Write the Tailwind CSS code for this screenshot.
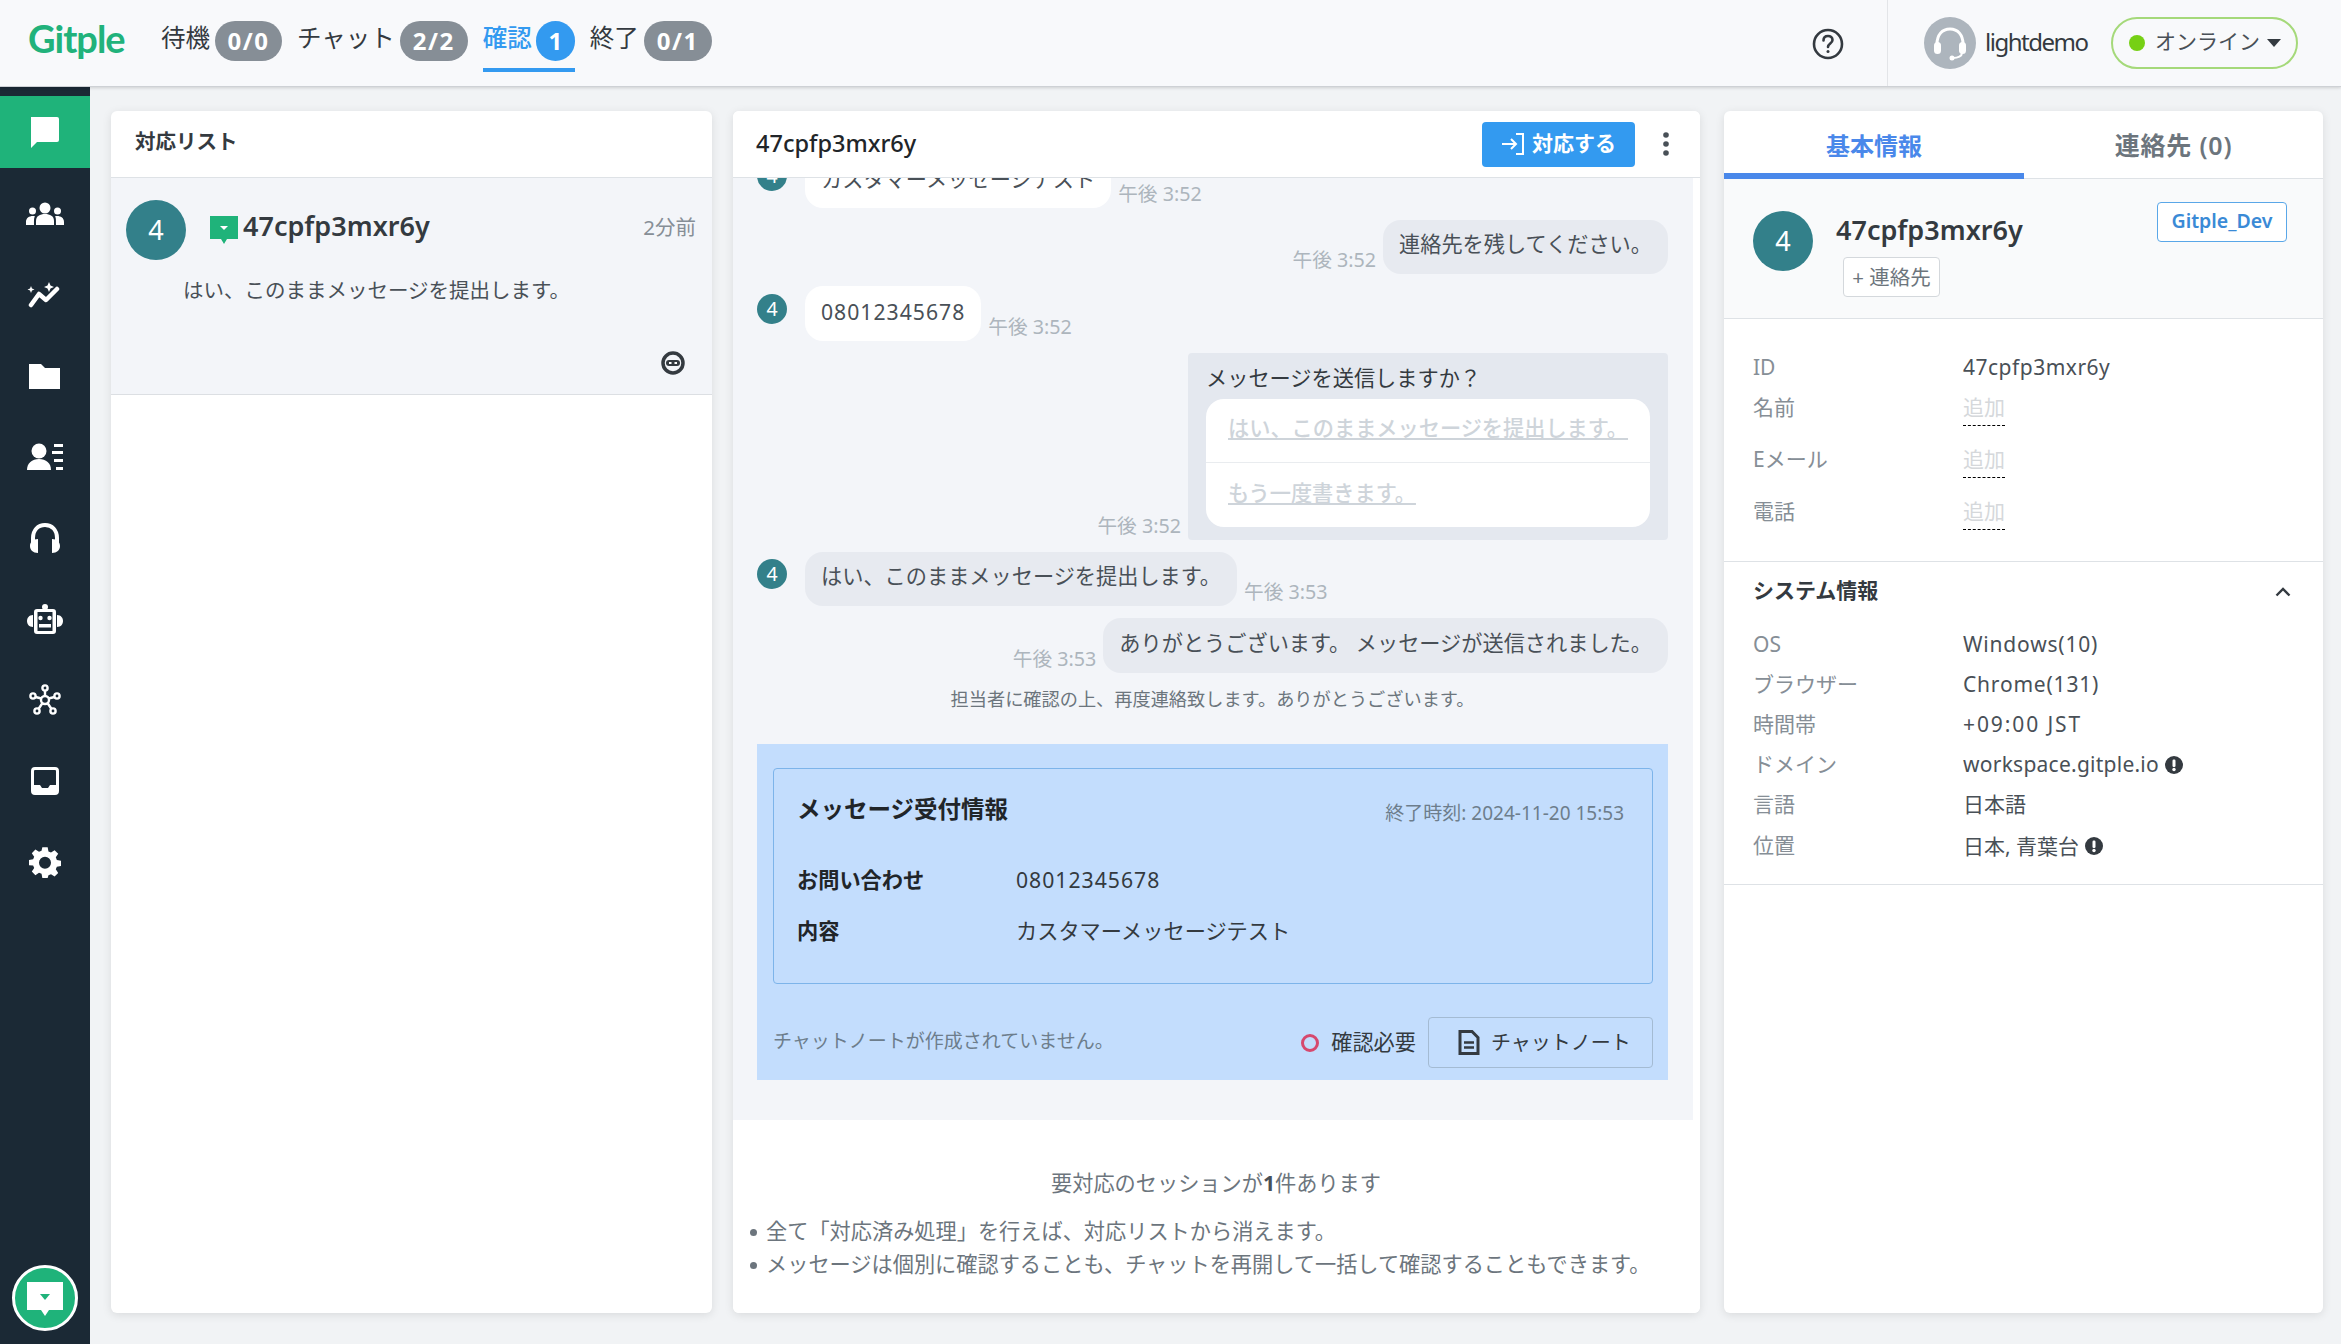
<!DOCTYPE html>
<html lang="ja">
<head>
<meta charset="UTF-8">
<title>Gitple</title>
<script src="https://cdn.jsdelivr.net/npm/@tailwindcss/browser@4"></script>
</head>
<body class="h-screen w-screen overflow-hidden flex flex-col bg-[#f1f3f5] text-[#495057] font-['Noto_Sans','Noto_Sans_CJK_JP',sans-serif]">

<!-- top bar -->
<header class="relative z-10 h-[87px] shrink-0 flex items-start bg-[#f8f9fb] border-b border-[#ced1d5] shadow-[0_1px_3px_rgba(0,0,0,.15)]">
    <div class="w-[161px] pl-[28px] pt-[14px] text-[38px] leading-[48px] font-['Lato',sans-serif] font-bold tracking-[-1px] text-[#21b27b]">Gitple</div>
    <nav class="flex items-start pt-[21px] text-[24.500px] leading-[40px] text-[#343a40]">
        <span class="mt-[-3px]">待機</span>
        <span class="ml-[5px] w-[67px] h-[40px] rounded-[20px] bg-[#868e96] text-white text-[24px] font-bold tracking-[1.500px] text-center">0/0</span>
        <span class="ml-[15px] mt-[-3px]">チャット</span>
        <span class="ml-[5px] w-[68px] h-[40px] rounded-[20px] bg-[#868e96] text-white text-[24px] font-bold tracking-[1.500px] text-center">2/2</span>
        <div class="ml-[15px] h-[51px] flex items-start border-b-4 border-[#339af0]">
            <span class="mt-[-3px] text-[#339af0] font-medium">確認</span>
            <span class="ml-[4px] w-[39px] h-[40px] rounded-[20px] bg-[#339af0] text-white text-[24px] font-bold text-center">1</span>
        </div>
        <span class="ml-[15px] mt-[-3px]">終了</span>
        <span class="ml-[5px] w-[68px] h-[40px] rounded-[20px] bg-[#868e96] text-white text-[24px] font-bold tracking-[1.500px] text-center">0/1</span>
    </nav>
    <div class="ml-auto flex items-center h-full">
        <svg class="w-[32px] h-[32px] mr-[43px] mt-[2px]" viewBox="0 0 32 32" fill="none" stroke="#343a40" stroke-width="2.600"><circle cx="16" cy="16" r="14"/><path d="M11.500 12.500c0-3 2-4.500 4.500-4.500s4.500 1.600 4.500 4c0 3.500-4.500 3.500-4.500 7" stroke-linecap="round"/><circle cx="16" cy="23.500" r="1.500" fill="#343a40" stroke="none"/></svg>
        <div class="h-full border-l border-[#e3e5e8] pl-[36px] flex items-center">
            <div class="w-[52px] h-[52px] rounded-full bg-[#adb5bd] flex items-center justify-center">
                <svg class="w-[40px] h-[40px]" viewBox="0 0 40 40" fill="none"><path d="M7 21c0-9 5-15 13-15s13 6 13 15" stroke="#fff" stroke-width="3"/><rect x="4" y="19" width="7" height="12" rx="3.500" fill="#fff"/><rect x="29" y="19" width="7" height="12" rx="3.500" fill="#fff"/><path d="M32 30c0 3-4 5-9 5" stroke="#fff" stroke-width="2"/><circle cx="22" cy="35" r="2.500" fill="#fff"/></svg>
            </div>
            <span class="ml-[9px] mt-[-3px] w-[102px] text-[24px] tracking-[-1.500px] text-[#343a40]">lightdemo</span>
            <div class="ml-[24px] mr-[43px] w-[187px] h-[52px] rounded-full border-2 border-[#a5d97a] flex items-center pl-[16px]">
                <span class="w-[16px] h-[16px] rounded-full bg-[#76d015]"></span>
                <span class="ml-[10px] mt-[-2px] text-[21px] text-[#495057]">オンライン</span>
                <svg class="ml-[7px] w-[14px] h-[8px]" viewBox="0 0 14 8"><path d="M0 0h14L7 8z" fill="#343a40"/></svg>
            </div>
        </div>
    </div>
</header>

<div class="flex-1 flex min-h-0">
    <!-- left nav -->
    <aside class="w-[90px] shrink-0 bg-[#1b2935] flex flex-col items-stretch pt-[9px] gap-[9px] text-white">
        <a class="h-[72px] mb-[1px] bg-[#1fb37a] flex items-center justify-center">
            <svg class="w-[32px] h-[32px] mr-[2px]" viewBox="0 0 32 32" fill="#fff"><path d="M3 1h26a2 2 0 0 1 2 2v21a2 2 0 0 1-2 2H9l-6 6z"/></svg>
        </a>
        <a class="h-[72px] flex items-center justify-center">
            <svg class="w-[38px] h-[24px]" viewBox="0 0 38 24" fill="#fff"><circle cx="19" cy="6" r="5.500"/><circle cx="6.500" cy="9" r="3.500"/><circle cx="31.500" cy="9" r="3.500"/><path d="M10 23v-4c0-5 4-7 9-7s9 2 9 7v4z"/><path d="M0 23v-3c0-4 3-6 7-6 1 0 1.500 0 2 .3-1 1.500-1 3-1 8.700zM38 23v-3c0-4-3-6-7-6-1 0-1.500 0-2 .3 1 1.500 1 3 1 8.700z"/></svg>
        </a>
        <a class="h-[72px] flex items-center justify-center">
            <svg class="w-[36px] h-[26px]" viewBox="0 0 36 26" fill="none"><path d="M4 23l8-11 7 6 11-11" stroke="#fff" stroke-width="4.500" stroke-linecap="round" stroke-linejoin="round"/><path d="M22 0l1.500 3.500L27 5l-3.500 1.500L22 10l-1.500-3.500L17 5l3.500-1.500zM4 4l1 2.500L7.500 7.500 5 8.500 4 11 3 8.500.5 7.500 3 6.500z" fill="#fff"/></svg>
        </a>
        <a class="h-[72px] flex items-center justify-center">
            <svg class="w-[31px] h-[25px] mr-[2px]" viewBox="0 0 31 25" fill="#fff"><path d="M0 0h12l4 4h15v21H0z"/></svg>
        </a>
        <a class="h-[72px] flex items-center justify-center">
            <svg class="w-[36px] h-[28px]" viewBox="0 0 36 28" fill="#fff"><circle cx="12" cy="8" r="7.500"/><path d="M0 27c0-7 5-11 12-11s12 4 12 11z"/><rect x="27" y="1" width="9" height="3"/><rect x="25" y="8" width="11" height="3"/><rect x="27" y="16" width="9" height="3"/><rect x="29" y="24" width="7" height="3"/></svg>
        </a>
        <a class="h-[72px] flex items-center justify-center">
            <svg class="w-[32px] h-[30px]" viewBox="0 0 32 30" fill="none"><path d="M4 20v-5C4 7 9 2 16 2s12 5 12 13v5" stroke="#fff" stroke-width="4"/><path d="M1 23c0-4 3-7 8-7v14c-5 0-8-3-8-7zM31 23c0-4-3-7-8-7v14c5 0 8-3 8-7z" fill="#fff"/></svg>
        </a>
        <a class="h-[72px] flex items-center justify-center">
            <svg class="w-[36px] h-[30px]" viewBox="0 0 36 30" fill="#fff"><circle cx="18" cy="3" r="3"/><path fill-rule="evenodd" d="M10 5h16a3 3 0 0 1 3 3v19a3 3 0 0 1-3 3H10a3 3 0 0 1-3-3V8a3 3 0 0 1 3-3zm.5 3v19h15V8z"/><path d="M6 11v12c-4 0-6-3-6-6s2-6 6-6zM30 11v12c4 0 6-3 6-6s-2-6-6-6z"/><circle cx="13.500" cy="14" r="2.200"/><circle cx="22.500" cy="14" r="2.200"/><rect x="12" y="20" width="12" height="3.500"/></svg>
        </a>
        <a class="h-[72px] flex items-center justify-center">
            <svg class="w-[32px] h-[32px]" viewBox="0 0 32 32" fill="none" stroke="#fff" stroke-width="2.400"><circle cx="16" cy="16" r="4"/><circle cx="16" cy="4" r="2.600"/><circle cx="4" cy="12" r="2.600"/><circle cx="28" cy="12" r="2.600"/><circle cx="8" cy="27" r="2.600"/><circle cx="24" cy="27" r="2.600"/><path d="M16 7v5M6.500 13l6 1.500M25.500 13l-6 1.500M9.500 25l4-6M22.500 25l-4-6"/></svg>
        </a>
        <a class="h-[72px] flex items-center justify-center">
            <svg class="w-[28px] h-[28px]" viewBox="0 0 28 28" fill="none"><rect x="1.500" y="1.500" width="25" height="25" rx="2.500" stroke="#fff" stroke-width="3"/><path d="M3 18h6l2 3h6l2-3h6v8H3z" fill="#fff"/></svg>
        </a>
        <a class="h-[72px] flex items-center justify-center">
            <svg class="w-[32px] h-[32px]" viewBox="0 0 24 24" fill="#fff"><path fill-rule="evenodd" d="M14 1l.6 3.100 1.900.8 2.700-1.800 2.700 2.800-1.800 2.600.8 2 3.100.5v4l-3.100.6-.8 1.900 1.800 2.700-2.700 2.700-2.700-1.800-1.900.8L14 24h-4l-.6-3.100-1.900-.8-2.700 1.800-2.700-2.700 1.800-2.700-.8-1.900L0 14.500v-4l3.100-.5.8-2L2.100 5.400l2.700-2.800 2.700 1.800 1.900-.8L10 1zM12 8a4.500 4.500 0 1 0 0 9 4.500 4.500 0 0 0 0-9z"/></svg>
        </a>
        <a class="mt-auto mb-[13px] ml-[12px] w-[66px] h-[66px] rounded-full bg-[#1fb37a] border-[3px] border-white flex items-center justify-center">
            <svg class="w-[40px] h-[40px]" viewBox="0 0 40 40"><path d="M2 4h36v28H24l-4 6-4-6H2z" fill="#fff"/><path d="M15 16h10l-5 6z" fill="#1fb37a"/></svg>
        </a>
    </aside>

    <!-- panels -->
    <main class="flex-1 min-w-0 flex items-start pt-[24px] pl-[21px] gap-[21px]">
        <!-- list -->
        <section class="w-[601px] h-[1202px] shrink-0 bg-white rounded-[6px] shadow-[0_2px_10px_rgba(0,0,0,.1)] overflow-hidden">
            <div class="h-[67px] flex items-start pl-[24px] pt-[14px] leading-[32px] border-b border-[#dee2e6] text-[20.500px] font-bold text-[#343a40]">対応リスト</div>
            <div class="relative h-[217px] bg-[#f3f5f9] border-b border-[#dcdfe3] pl-[15px] pr-[16px] pt-[22px]">
                <div class="flex items-start">
                    <div class="w-[60px] h-[60px] rounded-full bg-[#33808a] text-white text-[27px] leading-[60px] text-center">4</div>
                    <svg class="ml-[24px] mt-[16px] w-[28px] h-[28px]" viewBox="0 0 28 28"><path d="M0 0h28v23H17l-3 5-3-5H0z" fill="#1fb37a"/><path d="M10 10h8l-4 4z" fill="#fff"/></svg>
                    <span class="ml-[5px] mt-[6px] text-[27px] leading-[40px] font-semibold text-[#343a40]">47cpfp3mxr6y</span>
                    <span class="ml-auto mt-[13px] text-[20.500px] leading-[28px] text-[#868e96]">2分前</span>
                </div>
                <p class="mt-[15px] ml-[57px] text-[20.500px] leading-[30px] text-[#495057]">はい、このままメッセージを提出します。</p>
                <svg class="absolute right-[27px] bottom-[19px] w-[24px] h-[24px]" viewBox="0 0 24 24"><circle cx="12" cy="12" r="10" fill="none" stroke="#343a40" stroke-width="3.500"/><rect x="5" y="9" width="14" height="6" rx="3" fill="#343a40"/><rect x="8" y="11" width="2.500" height="2" fill="#fff"/><rect x="13.500" y="11" width="2.500" height="2" fill="#fff"/></svg>
            </div>
        </section>

        <!-- conversation -->
        <section class="w-[967px] h-[1202px] shrink-0 bg-white rounded-[6px] shadow-[0_2px_10px_rgba(0,0,0,.1)] overflow-hidden flex flex-col">
            <div class="relative z-10 h-[67px] shrink-0 flex items-center pl-[23px] pr-[31px] bg-white border-b border-[#dee2e6]">
                <span class="text-[23.500px] font-medium text-[#212529]">47cpfp3mxr6y</span>
                <button class="ml-auto w-[153px] h-[45px] rounded-[4px] bg-[#339af0] text-white text-[21px] font-bold flex items-center justify-center">
                    <svg class="w-[24px] h-[24px] mr-[7px]" viewBox="0 0 24 24" fill="none" stroke="#fff" stroke-width="2"><path d="M1 12h13M10 7l5 5-5 5M15 2h7v20h-7"/></svg>
                    対応する
                </button>
                <svg class="ml-[28px] w-[6px] h-[24px]" viewBox="0 0 6 24" fill="#495057"><circle cx="3" cy="3" r="2.800"/><circle cx="3" cy="12" r="2.800"/><circle cx="3" cy="21" r="2.800"/></svg>
            </div>
            <div class="flex-1 min-h-0 mr-[7px] bg-[#f3f5f9] overflow-hidden pl-[24px] pr-[25px] text-[21.200px] leading-[30px]">
                <div class="mt-[-25px] flex items-end">
                    <div class="self-start mt-[8px] w-[30px] h-[30px] rounded-full bg-[#33808a] text-white text-[19.500px] leading-[30px] text-center">4</div>
                    <div class="ml-[18px] bg-white rounded-[18px] pl-[16px] pr-[16px] pt-[11px] pb-[14px]">カスタマーメッセージテスト</div>
                    <span class="ml-[7px] mb-[4px] text-[19.700px] leading-[20px] text-[#adb5bd]">午後 3:52</span>
                </div>
                <div class="mt-[12px] flex items-end justify-end">
                    <span class="mr-[7px] mb-[4px] text-[19.700px] leading-[20px] text-[#adb5bd]">午後 3:52</span>
                    <div class="bg-[#e7eaf0] rounded-[18px] px-[16px] pt-[9px] pb-[15px]">連絡先を残してください。</div>
                </div>
                <div class="mt-[12px] flex items-end">
                    <div class="self-start mt-[8px] w-[30px] h-[30px] rounded-full bg-[#33808a] text-white text-[19.500px] leading-[30px] text-center">4</div>
                    <div class="ml-[18px] bg-white rounded-[18px] px-[16px] pt-[11px] pb-[14px] tracking-[1px]">08012345678</div>
                    <span class="ml-[7px] mb-[4px] text-[19.700px] leading-[20px] text-[#adb5bd]">午後 3:52</span>
                </div>
                <div class="mt-[12px] flex items-end justify-end">
                    <span class="mr-[7px] mb-[4px] text-[19.700px] leading-[20px] text-[#adb5bd]">午後 3:52</span>
                    <div class="w-[480px] h-[187px] bg-[#e4e8ef] rounded-[4px] pl-[18px] pr-[18px] pt-[10px]">
                        <div class="text-[#343a40]">メッセージを送信しますか？</div>
                        <div class="mt-[6px] bg-white rounded-[18px] h-[128px] flex flex-col text-[#ced4da] font-medium">
                            <div class="h-[64px] border-b border-[#e9ecef] pl-[22px] pt-[14px]"><a class="underline">はい、このままメッセージを提出します。</a></div>
                            <div class="pl-[22px] pt-[15px]"><a class="underline">もう一度書きます。</a></div>
                        </div>
                    </div>
                </div>
                <div class="mt-[12px] flex items-end">
                    <div class="self-start mt-[7px] w-[30px] h-[30px] rounded-full bg-[#33808a] text-white text-[19.500px] leading-[30px] text-center">4</div>
                    <div class="ml-[18px] bg-[#e7eaf0] rounded-[18px] px-[16px] pt-[9px] pb-[15px]">はい、このままメッセージを提出します。</div>
                    <span class="ml-[7px] mb-[4px] text-[19.700px] leading-[20px] text-[#adb5bd]">午後 3:53</span>
                </div>
                <div class="mt-[12px] flex items-end justify-end">
                    <span class="mr-[7px] mb-[4px] text-[19.700px] leading-[20px] text-[#adb5bd]">午後 3:53</span>
                    <div class="bg-[#e7eaf0] rounded-[18px] px-[16px] pt-[10px] pb-[15px]">ありがとうございます。 メッセージが送信されました。</div>
                </div>
                <p class="mt-[11px] text-center text-[18.200px] leading-[30px] text-[#6c757d]">担当者に確認の上、再度連絡致します。ありがとうございます。</p>
                <div class="mt-[30px] h-[336px] bg-[#c3ddfd] pl-[16px] pr-[15px] pt-[24px]">
                    <div class="h-[216px] border border-[#7db4ea] rounded-[4px] px-[23px] pt-[24px]">
                        <div class="flex items-start">
                            <span class="text-[23.500px] leading-[32px] font-bold text-[#212529]">メッセージ受付情報</span>
                            <span class="ml-auto mt-[4px] mr-[5px] text-[19px] leading-[32px] text-[#6d7d8c]">終了時刻: 2024-11-20 15:53</span>
                        </div>
                        <div class="mt-[33px] flex leading-[36px]">
                            <span class="w-[219px] font-bold text-[#212529]">お問い合わせ</span>
                            <span class="text-[#343a40] tracking-[1px]">08012345678</span>
                        </div>
                        <div class="mt-[15px] flex leading-[36px]">
                            <span class="w-[219px] font-bold text-[#212529]">内容</span>
                            <span class="text-[#343a40]">カスタマーメッセージテスト</span>
                        </div>
                    </div>
                    <div class="mt-[33px] flex items-center">
                        <span class="mt-[-3px] text-[19px] text-[#6d7d8c]">チャットノートが作成されていません。</span>
                        <span class="ml-auto w-[18px] h-[18px] rounded-full border-[3px] border-[#d6486e]"></span>
                        <span class="ml-[12px] mt-[-2px] text-[#343a40]">確認必要</span>
                        <button class="ml-[12px] w-[225px] h-[51px] rounded-[4px] border border-[#a4bbd3] flex items-center pl-[29px] text-[20px] text-[#343a40]">
                            <svg class="w-[22px] h-[27px] mr-[11px]" viewBox="0 0 22 26" fill="none" stroke="#343a40" stroke-width="3"><path d="M2 2h12l6 6v16H2z"/><path d="M6 13h10M6 18h10" stroke-width="2.400"/></svg>
                            チャットノート
                        </button>
                    </div>
                </div>
            </div>
            <div class="h-[193px] shrink-0 bg-white pt-[48px] pl-[17px] text-[21.200px] leading-[30px] text-[#6c757d]">
                <p class="text-center mr-[18px]">要対応のセッションが<b class="font-bold text-[#495057]">1</b>件あります</p>
                <p class="mt-[18px]"><span class="inline-block w-[7px] h-[7px] mr-[9px] mb-[3px] rounded-full bg-[#6c757d]"></span>全て「対応済み処理」を行えば、対応リストから消えます。</p>
                <p class="mt-[3px]"><span class="inline-block w-[7px] h-[7px] mr-[9px] mb-[3px] rounded-full bg-[#6c757d]"></span>メッセージは個別に確認することも、チャットを再開して一括して確認することもできます。</p>
            </div>
        </section>

        <!-- details -->
        <section class="ml-[3px] w-[599px] h-[1202px] shrink-0 bg-white rounded-[6px] shadow-[0_2px_10px_rgba(0,0,0,.1)] overflow-hidden">
            <div class="flex h-[68px] border-b border-[#dee2e6] text-[24px] font-semibold">
                <div class="w-[300px] h-[68px] pt-[7px] border-b-[6px] border-[#4a88ea] text-[#4a88ea] flex items-center justify-center">基本情報</div>
                <div class="flex-1 pt-[2px] text-[25px] tracking-[.8px] text-[#6c757d] flex items-center justify-center">連絡先 (0)</div>
            </div>
            <div class="h-[140px] bg-[#f9fafb] border-b border-[#dee2e6] pl-[29px] pr-[36px] flex items-start">
                <div class="mt-[32px] w-[60px] h-[60px] rounded-full bg-[#33808a] text-white text-[27px] leading-[60px] text-center">4</div>
                <div class="ml-[23px] mt-[31px]">
                    <div class="text-[27px] leading-[40px] font-semibold text-[#343a40]">47cpfp3mxr6y</div>
                    <button class="mt-[7px] ml-[7px] w-[97px] h-[40px] rounded-[4px] bg-white border border-[#d4d8dc] text-[20.500px] text-[#6c757d]">+ 連絡先</button>
                </div>
                <span class="ml-auto mt-[23px] w-[130px] h-[40px] rounded-[4px] bg-white border border-[#5aa7e8] text-[#3a8ad6] text-[19.500px] font-semibold leading-[36px] text-center">Gitple_Dev</span>
            </div>
            <div class="pt-[29px] pb-[29px] pl-[29px] border-b border-[#dee2e6] text-[21px]">
                <div class="flex items-center h-[40px]"><span class="w-[210px] text-[#868e96]">ID</span><span class="tracking-[.5px] text-[#495057]">47cpfp3mxr6y</span></div>
                <div class="flex h-[40px] mb-[12px]"><span class="w-[210px] leading-[38px] text-[#868e96]">名前</span><span class="h-[38px] leading-[38px] border-b border-dashed border-black text-[#d5d8db]">追加</span></div>
                <div class="flex h-[40px] mb-[12px]"><span class="w-[210px] leading-[38px] text-[#868e96]">Eメール</span><span class="h-[38px] leading-[38px] border-b border-dashed border-black text-[#d5d8db]">追加</span></div>
                <div class="flex h-[40px]"><span class="w-[210px] leading-[38px] text-[#868e96]">電話</span><span class="h-[38px] leading-[38px] border-b border-dashed border-black text-[#d5d8db]">追加</span></div>
            </div>
            <div class="pl-[29px] pr-[32px] pb-[18px] border-b border-[#dee2e6] text-[21px]">
                <div class="h-[63px] pb-[5px] flex items-center font-bold text-[#343a40]">
                    システム情報
                    <svg class="ml-auto mt-[2px] w-[16px] h-[10px]" viewBox="0 0 16 10" fill="none" stroke="#343a40" stroke-width="2.400"><path d="M1.500 8.500L8 2l6.500 6.500"/></svg>
                </div>
                <div class="flex items-center h-[40px]"><span class="w-[210px] text-[#868e96]">OS</span><span class="tracking-[.8px]">Windows(10)</span></div>
                <div class="flex items-center h-[40px]"><span class="w-[210px] text-[#868e96]">ブラウザー</span><span class="tracking-[.8px]">Chrome(131)</span></div>
                <div class="flex items-center h-[40px]"><span class="w-[210px] text-[#868e96]">時間帯</span><span class="tracking-[1.900px]">+09:00 JST</span></div>
                <div class="flex items-center h-[40px]"><span class="w-[210px] text-[#868e96]">ドメイン</span><span class="tracking-[.25px]">workspace.gitple.io</span>
                    <svg class="ml-[6px] w-[18px] h-[18px]" viewBox="0 0 18 18"><circle cx="9" cy="9" r="9" fill="#343a40"/><rect x="7.500" y="3.500" width="3" height="7.500" rx="1.200" fill="#fff"/><circle cx="9" cy="13.500" r="1.700" fill="#fff"/></svg></div>
                <div class="flex items-center h-[40px]"><span class="w-[210px] text-[#868e96]">言語</span><span>日本語</span></div>
                <div class="flex items-center h-[41px]"><span class="w-[210px] text-[#868e96]">位置</span><span class="pt-[2px]">日本, 青葉台</span>
                    <svg class="ml-[6px] w-[18px] h-[18px]" viewBox="0 0 18 18"><circle cx="9" cy="9" r="9" fill="#343a40"/><rect x="7.500" y="3.500" width="3" height="7.500" rx="1.200" fill="#fff"/><circle cx="9" cy="13.500" r="1.700" fill="#fff"/></svg></div>
            </div>
        </section>
    </main>
</div>
</body>
</html>
